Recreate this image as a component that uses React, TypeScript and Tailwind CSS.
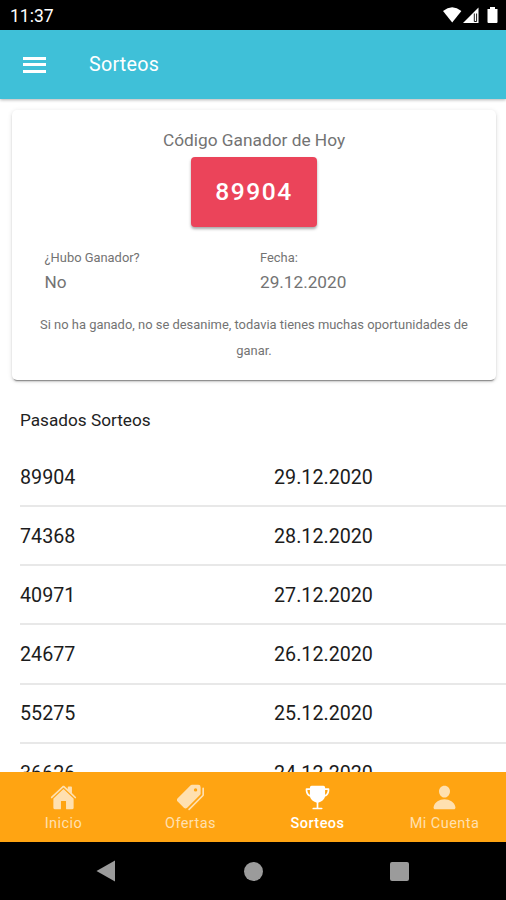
import { IoHome, IoPerson, IoPricetags, IoTrophy } from 'react-icons/io5'
import type { IconType } from 'react-icons'
import { clsx } from 'clsx'

type Draw = { code: string; date: string }

const draws: Draw[] = [
  { code: '89904', date: '29.12.2020' },
  { code: '74368', date: '28.12.2020' },
  { code: '40971', date: '27.12.2020' },
  { code: '24677', date: '26.12.2020' },
  { code: '55275', date: '25.12.2020' },
  { code: '36626', date: '24.12.2020' },
]

const tabs: { label: string; icon: IconType; active?: boolean }[] = [
  { label: 'Inicio', icon: IoHome },
  { label: 'Ofertas', icon: IoPricetags },
  { label: 'Sorteos', icon: IoTrophy, active: true },
  { label: 'Mi Cuenta', icon: IoPerson },
]

function StatusBar() {
  return (
    <div className="flex h-[30px] shrink-0 items-center justify-between bg-black pr-[8px] pl-[10px] text-white">
      <span className="pt-[3px] text-[17.5px] leading-none">11:37</span>
      <svg width="55" height="18" viewBox="0 0 55 18" fill="currentColor">
        <path d="M0 5 Q9.2 -2.4 18.4 5 L9.2 16.5 Z" />
        <path d="M35.5 1.5V17H20Z" />
        <path d="M31.3 7.5V15.5H33.6V7.5" fill="none" stroke="#000" strokeWidth="0.9" />
        <path d="M47 1h5v2h2.5v13q0 1-1 1h-8q-1 0-1-1V3H47Z" />
      </svg>
    </div>
  )
}

function Header() {
  return (
    <header className="z-10 flex h-[69px] shrink-0 items-center bg-[#3fc0d8] pl-[23px] text-white shadow-[0_1px_3px_rgba(0,0,0,0.3)]">
      <button className="flex w-[23px] flex-col gap-[3.5px]" aria-label="Menu">
        <span className="h-[3px] w-full bg-current" />
        <span className="h-[3px] w-full bg-current" />
        <span className="h-[3px] w-full bg-current" />
      </button>
      <h1 className="ml-[43px] text-[19.7px] leading-none tracking-[0.25px]">Sorteos</h1>
    </header>
  )
}

function WinnerCard() {
  return (
    <section className="mr-[10px] ml-[12px] mt-[11px] flex h-[270px] flex-col rounded-[5px] bg-white pt-[18px] text-[#737373] shadow-[0_3px_1px_-2px_rgba(0,0,0,0.35),0_2px_2px_0_rgba(0,0,0,0.12),0_1px_5px_0_rgba(0,0,0,0.12)]">
      <p className="text-center text-[17.3px] leading-6">Código Ganador de Hoy</p>
      <div className="mx-auto mt-[5px] flex h-[70px] w-[126px] items-center justify-center rounded-[4px] bg-[#eb445a] text-[24.6px] font-medium tracking-[1.5px] text-white shadow-[0_2px_3px_rgba(0,0,0,0.35)]">
        89904
      </div>
      <div className="mt-[21px] grid grid-cols-[215.5px_1fr] pl-[32.5px]">
        <div>
          <p className="text-[12.9px] leading-5">¿Hubo Ganador?</p>
          <p className="text-[17.2px] leading-[29px]">No</p>
        </div>
        <div>
          <p className="text-[12.9px] leading-5">Fecha:</p>
          <p className="text-[17.2px] leading-[29px]">29.12.2020</p>
        </div>
      </div>
      <p className="mt-[15px] px-6 text-center text-[12.93px] leading-[26px]">
        Si no ha ganado, no se desanime, todavia tienes muchas oportunidades de ganar.
      </p>
    </section>
  )
}

function DrawRow({ code, date }: Draw) {
  return (
    <li className="grid h-[59.2px] grid-cols-2 items-center border-b-2 border-[#e8e8e8] pt-[2px] text-[19.7px] text-[#1c1c1c]">
      <span>{code}</span>
      <span className="pl-[11px]">{date}</span>
    </li>
  )
}

function TabBar() {
  return (
    <nav className="grid h-[70px] shrink-0 grid-cols-[repeat(4,127px)] bg-[#ffa412]">
      {tabs.map(({ label, icon: Icon, active }) => (
        <button
          key={label}
          className={clsx(
            'flex flex-col items-center pt-[12px]',
            active ? 'font-medium text-white' : 'text-[#ffe0b0]'
          )}
        >
          <Icon className="size-[27px]" />
          <span className="mt-[5px] text-[14.5px] leading-4 tracking-[0.45px]">{label}</span>
        </button>
      ))}
    </nav>
  )
}

function SystemNav() {
  return (
    <div className="flex h-[58px] shrink-0 items-center justify-between bg-black pr-[97px] pl-[96px] text-[#9b9b9b]">
      <svg width="19" height="22" viewBox="0 0 19 22" fill="currentColor">
        <path d="M19 0.5V21.5L0.5 11Z" />
      </svg>
      <span className="ml-[2px] size-[19px] rounded-full bg-current" />
      <span className="size-[19px] rounded-[2px] bg-current" />
    </div>
  )
}

export default function App() {
  return (
    <div className="flex h-[900px] w-[506px] flex-col overflow-hidden bg-white font-[Roboto,sans-serif]">
      <StatusBar />
      <Header />
      <main className="min-h-0 flex-1 overflow-hidden">
        <WinnerCard />
        <h2 className="mt-[28px] pl-[20px] text-[17.2px] leading-6 text-[#222]">Pasados Sorteos</h2>
        <ul className="mt-[15.8px] pl-[20px]">
          {draws.map(draw => (
            <DrawRow key={draw.date} {...draw} />
          ))}
        </ul>
      </main>
      <TabBar />
      <SystemNav />
    </div>
  )
}
